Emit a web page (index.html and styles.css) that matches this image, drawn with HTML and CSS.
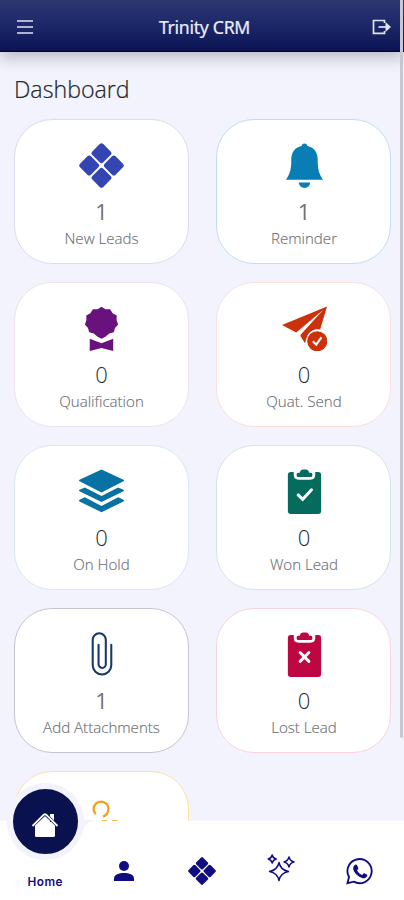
FILE: index.html
```html
<!DOCTYPE html>
<html lang="en">
<head>
<meta charset="utf-8">
<meta name="viewport" content="width=device-width, initial-scale=1">
<title>Trinity CRM</title>
<link rel="stylesheet" href="styles.css">
</head>
<body>
<svg class="defs" aria-hidden="true">
  <symbol id="tiles" viewBox="0 0 46 46">
    <g transform="rotate(45 23 23)"><rect x="6.2" y="6.2" width="15.8" height="15.8" rx="2.6"/><rect x="24" y="6.2" width="15.8" height="15.8" rx="2.6"/><rect x="6.2" y="24" width="15.8" height="15.8" rx="2.6"/><rect x="24" y="24" width="15.8" height="15.8" rx="2.6"/></g>
  </symbol>
</svg>
<header class="topbar">
  <svg class="menu" viewBox="0 0 18 16"><path d="M1 2h16M1 8h16M1 14h16"/></svg>
  <h1>Trinity CRM</h1>
  <svg class="logout" viewBox="0 0 20 16"><path d="M12.500 4V1.500H1.500v12.800h11V12"/><path d="M6.500 8h9"/><path class="head" d="M13.500 3 19 8l-5.500 5z"/></svg>
</header>
<main>
  <h2>Dashboard</h2>
  <div class="grid">
    <section class="card leads"><svg viewBox="0 0 46 46"><use href="#tiles"/></svg><strong>1</strong><span>New Leads</span></section>
    <section class="card reminder"><svg viewBox="0 0 46 46"><path d="M23 .5c1.800 0 2.700.9 3 2.500C33 4.500 36.500 9.500 36.500 17c0 9 1 14 5.500 20.500H4C8.500 31 9.500 26 9.500 17 9.500 9.500 13 4.500 20 3c.3-1.600 1.200-2.500 3-2.500zM17 40.500h12c-.6 3.400-2.800 5.500-6 5.500s-5.400-2.100-6-5.500z"/></svg><strong>1</strong><span>Reminder</span></section>
    <section class="card qualification"><svg viewBox="0 0 46 46"><path d="m23 .8 4 2.500 4.800 0 2.600 4 4.200 2.300-.2 4.800 1.600 4.400-3.200 3.600-1.200 4.500-4.700 1.200L27 31.500l-4 2-4-2-3.900-3.400-4.700-1.200-1.200-4.500L6 18.800l1.600-4.400-.2-4.800 4.200-2.300 2.600-4H19z"/><path d="M11 33.500 23 38l12-4.500V46l-12-3L11 46z"/></svg><strong>0</strong><span>Qualification</span></section>
    <section class="card send"><svg viewBox="0 0 46 46"><path d="M46 .5 0 19.500 14.500 27 42 4 19 29.500v1.500l4.500 7 2-6.500C28 25.500 33 23 39 24z"/><circle cx="36" cy="36" r="10.300"/><path class="cut" d="m31.500 36 3.500 3.500 5.300-7.500"/></svg><strong>0</strong><span>Quat. Send</span></section>
    <section class="card hold"><svg viewBox="0 0 46 46"><path d="M23 .5 45.500 11q1 .8 0 1.600L23 24 .5 12.600q-1-.8 0-1.600zM.5 21.200 6 18.800l17 8.700 17-8.700 5.500 2.400q1 .8 0 1.600L23 33.700.5 22.800q-1-.8 0-1.600zM.5 31.500 6 29l17 8.700L40 29l5.500 2.500q1 .8 0 1.600L23 44.200.5 33.100q-1-.8 0-1.600z"/></svg><strong>0</strong><span>On Hold</span></section>
    <section class="card won"><svg viewBox="0 0 46 46"><path d="M9 3h28q3 0 3 3v37q0 3-3 3H9q-3 0-3-3V6q0-3 3-3z"/><path fill="#fff" d="M12 0h22v6q0 5-5 5H17q-5 0-5-5z"/><path d="M15 7V5.200Q15 3.800 17 3.800h1.200Q19 .5 21.500.5h3q2.500 0 3.300 3.300H29q2 0 2 1.400V7q0 1.200-1.500 1.200h-13Q15 8.200 15 7z"/><path class="cut wide" d="m16.500 26.500 4.700 4.500 9-9.700"/></svg><strong>0</strong><span>Won Lead</span></section>
    <section class="card attach"><svg viewBox="0 0 46 46"><path d="M33 13v21a9.500 9.500 0 0 1-19 0V8a6.700 6.700 0 0 1 13.400 0v25a3.700 3.700 0 0 1-7.400 0V13"/></svg><strong>1</strong><span>Add Attachments</span></section>
    <section class="card lost"><svg viewBox="0 0 46 46"><path d="M9 3h28q3 0 3 3v37q0 3-3 3H9q-3 0-3-3V6q0-3 3-3z"/><path fill="#fff" d="M12 0h22v6q0 5-5 5H17q-5 0-5-5z"/><path d="M15 7V5.200Q15 3.800 17 3.800h1.200Q19 .5 21.500.5h3q2.500 0 3.300 3.300H29q2 0 2 1.400V7q0 1.200-1.500 1.200h-13Q15 8.200 15 7z"/><path class="cut wide" d="m18.500 21 9 9m0-9-9 9"/></svg><strong>0</strong><span>Lost Lead</span></section>
    <section class="card pending"><svg viewBox="0 0 46 46"><path d="M17 14.500a7.600 7.600 0 1 1 11.500-.5q-1.500 2-4 3"/><path d="M23.500 22h5m5 0h6"/></svg></section>
  </div>
</main>
<nav>
  <a class="home"><span class="bubble"><svg viewBox="0 0 28 26"><path d="M4 13v10.500Q4 25 5.500 25h17q1.500 0 1.500-1.500V13L14 4zM19 2h4v8h-4z"/><path class="roof" d="m1.500 14 11.300-11.300q1.200-1 2.400 0L26.500 14"/><path class="ridge" d="m1.500 14 11.300-11.300q1.200-1 2.400 0L26.500 14"/></svg></span>Home</a>
  <a><svg class="person" viewBox="0 0 20 20"><circle cx="10" cy="5" r="5"/><path d="M0 20v-2.500C0 13.500 5 12 10 12s10 1.500 10 5.500V20z"/></svg></a>
  <a><svg class="tiles" viewBox="0 0 46 46"><use href="#tiles"/></svg></a>
  <a><svg class="sparkles" viewBox="0 0 28 28"><path d="M12 8.500Q13.500 16 21.500 17.500 13.500 19 12 26.500 10.500 19 2.500 17.500 10.500 16 12 8.500zM5.200 1Q6 4.200 9.200 5 6 5.800 5.200 9 4.400 5.800 1.200 5 4.400 4.200 5.200 1zM22 3Q23 7 27 8 23 9 22 13 21 9 17 8 21 7 22 3z"/></svg></a>
  <a><svg class="whatsapp" viewBox="0 0 28 28"><path class="ring" d="M1.500 26.200 3 20a12.100 12.100 0 1 1 4.700 4.700z"/><path d="M8.300 8.600c1.300-1.500 2.500-1.200 3 .1l1 2.400c.3.700-.8 1.800-1.200 2.300 1.200 2.200 2.800 3.600 5.100 4.600.7-.7 1.300-2 2.100-1.700l2.500 1.300c1 .5.300 2.400-.8 3-2 1.200-4.300.4-6.700-.9-2.700-1.500-5.500-4.700-6-7.200-.3-1.600 0-2.900 1-3.900z"/></svg></a>
</nav>
<div class="scrollbar"></div>
</body>
</html>
```
FILE: styles.css
```css
* { box-sizing: border-box; }
body {
  margin: 0;
  height: 900px;
  overflow: hidden;
  background: #f2f3fc;
  font-family: "Open Sans", "Noto Sans", sans-serif;
}
.defs { position: absolute; width: 0; height: 0; }
.topbar {
  display: flex;
  align-items: center;
  justify-content: space-between;
  height: 52px;
  padding: 2px 12px 0 16px;
  background: linear-gradient(#2c3670, #1c2768 50%, #0b1555 96%, #00003c);
  box-shadow: 0 6px 14px rgba(60, 60, 70, .3);
}
.topbar h1 {
  margin: 0;
  padding-left: 3px;
  color: #eeeefa;
  font-family: "Noto Sans", sans-serif;
  font-size: 17.7px;
  font-weight: 400;
  letter-spacing: -.3px;
  -webkit-text-stroke: .2px #eeeefa;
}
.topbar svg { fill: none; stroke: #e2e3f3; stroke-width: 1.7; }
.menu { width: 18px; height: 16px; }
.logout { width: 20px; height: 16px; }
.topbar .head { fill: #e2e3f3; stroke: none; }
main { height: 848px; overflow: hidden; }
h2 {
  margin: 0;
  padding: 20px 14px 0;
  height: 67px;
  color: #24262b;
  font-size: 23.2px;
  font-weight: 300;
  line-height: 34px;
  -webkit-text-stroke: .2px #24262b;
}
.grid {
  display: grid;
  grid-template-columns: 175px 175px;
  grid-auto-rows: 144.5px;
  gap: 18.5px 27.5px;
  padding-left: 13.5px;
}
.card {
  display: flex;
  flex-direction: column;
  align-items: center;
  padding: 23px 0 0 1px;
  background: #fff;
  border: 1px solid;
  border-radius: 38px;
}
.card svg { width: 45px; height: 45px; flex: none; fill: currentColor; }
.card strong {
  margin-top: 8px;
  color: #26282b;
  font-size: 22px;
  font-weight: 300;
  line-height: 30px;
}
.card span {
  color: #6c7075;
  font-size: 15.1px;
  font-weight: 300;
  line-height: 24px;
  -webkit-text-stroke: .15px #6c7075;
}
.card .cut { fill: none; stroke: #fff; stroke-width: 2.2; }
.card .wide { stroke-width: 3; stroke-linecap: round; }
.leads { color: #3445b2; border-color: #dcdcf0; }
.reminder { color: #087eb4; border-color: #bce0ee; }
.qualification { color: #69117c; border-color: #eee2f0; }
.send { color: #cb310a; border-color: #fbe0dc; }
.hold { color: #0872a5; border-color: #d8e8f3; }
.won { color: #056b5c; border-color: #d1e7e6; }
.attach { color: #173669; border-color: #c4c5d0; }
.lost { color: #bd0642; border-color: #f8d4df; }
.pending { color: #f5a11d; border-color: #ffe0a0; }
.leads strong, .reminder strong, .attach strong { color: #707276; font-weight: 400; }
.attach svg { fill: none; stroke: currentColor; stroke-width: 2.1; stroke-linecap: round; }
.pending { padding-top: 28px; }
.pending svg { fill: none; stroke: currentColor; stroke-width: 2.4; }
nav {
  position: fixed;
  left: 0;
  bottom: 0;
  display: flex;
  align-items: center;
  width: 404px;
  height: 79px;
  padding: 20px 5px 0 6px;
  background: #fff;
  color: #100d80;
}
nav a { display: flex; flex: 1; justify-content: center; }
nav svg { fill: currentColor; }
nav .home {
  flex-direction: column;
  align-items: center;
  align-self: flex-start;
  font-family: Inter, sans-serif;
  font-size: 11.8px;
  font-weight: 600;
  letter-spacing: .5px;
  line-height: 16px;
}
.bubble {
  position: relative;
  display: flex;
  align-items: center;
  justify-content: center;
  width: 77px;
  height: 77px;
  margin-top: -58px;
  margin-bottom: 14px;
  border: 6px solid #f2f3fc;
  border-radius: 50%;
  background: #09124f;
  color: #fff;
}
.bubble::after {
  content: "";
  position: absolute;
  left: 69px;
  top: 31px;
  width: 14px;
  height: 14px;
  background: radial-gradient(circle at 100% 100%, transparent 13px, #f2f3fc 14px);
}
.bubble svg { width: 28px; height: 26px; margin-top: 7px; }
.roof, .ridge { fill: none; stroke: #09124f; stroke-width: 3; }
.bubble .ridge { stroke: #fff; stroke-width: 1.8; }
.person { width: 20px; height: 20px; }
.tiles, .sparkles, .whatsapp { width: 28px; height: 28px; }
.sparkles { margin-top: -5px; }
.sparkles path { fill: none; stroke: currentColor; stroke-width: 1.5; stroke-linejoin: round; }
.whatsapp .ring { fill: none; stroke: currentColor; stroke-width: 1.9; }
.scrollbar {
  position: fixed;
  top: 0;
  right: 1px;
  width: 3px;
  height: 738px;
  background: #c8c8d0;
  border-radius: 0 0 2px 2px;
}
```
